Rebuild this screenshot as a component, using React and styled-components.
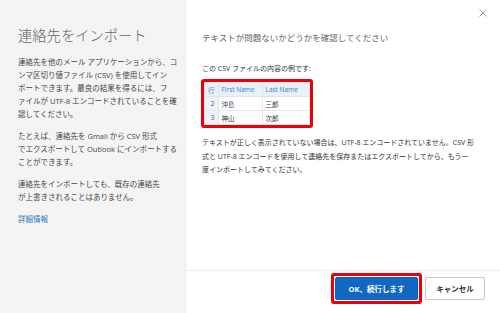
import React from 'react';
import styled, {createGlobalStyle} from 'styled-components';

const GlobalStyle = createGlobalStyle`
  html, body {
    margin: 0;
    padding: 0;
    background: #fff;
  }
  body {
    font-family: "Open Sans", "Noto Sans CJK JP", sans-serif;
    color: #333;
  }
`;

const Dialog = styled.div`
  display: flex;
  width: 500px;
  height: 313px;
  overflow: hidden;
  background: #fff;
`;

const Sidebar = styled.div`
  width: 186px;
  box-sizing: border-box;
  padding: 26px 8px 0 18px;
  background: #f4f4f4;
  border-right: 1px solid #ececec;
`;

const Title = styled.h1`
  margin: 0;
  font-size: 14.3px;
  line-height: 20px;
  font-weight: 300;
  color: #666;
  white-space: nowrap;
`;

const Para = styled.p`
  margin: ${p => p.$first ? '10px' : '9px'} 0 0;
  font-size: 7.5px;
  line-height: 13px;
  color: #444;
  white-space: nowrap;
`;

const Link = styled.a`
  display: block;
  margin-top: 9px;
  font-size: 7.5px;
  line-height: 13px;
  color: #2b79c2;
  text-decoration: none;
`;

const Main = styled.div`
  flex: 1;
  display: flex;
  flex-direction: column;
`;

const CloseRow = styled.div`
  display: flex;
  justify-content: flex-end;
  align-items: center;
  height: 26px;
  padding-right: 13px;
`;

const CloseButton = styled.button`
  display: flex;
  padding: 0;
  border: 0;
  background: none;
  cursor: pointer;
`;

const Content = styled.div`
  flex: 1;
  padding: 0 14px 0 16px;
`;

const Heading = styled.h2`
  margin: 6px 0 0;
  font-size: 8.5px;
  line-height: 12px;
  font-weight: 400;
  color: #666;
`;

const Text = styled.p`
  margin: ${p => p.$mt || '0'} 0 0;
  font-size: 7px;
  line-height: ${p => p.$lh || '13px'};
  color: #333;
  white-space: nowrap;
`;

const Highlight = styled.div`
  display: inline-flex;
  margin-top: ${p => p.$mt || '0'};
  margin-left: ${p => p.$ml || '0'};
  padding: ${p => p.$pad || '0'};
  border: 3px solid #e8000b;
  border-radius: 3px;
`;

const Table = styled.table`
  border-collapse: collapse;
  font-size: 6.5px;
`;

const Th = styled.th`
  height: 14px;
  padding: 0 3px;
  background: #e9f0f8;
  border: 1px solid #dbe5f0;
  color: #3b7fcf;
  font-weight: 400;
  text-align: left;
  width: ${p => p.$w};
  box-sizing: border-box;
`;

const RowNum = styled.td`
  height: 13px;
  padding: 0 3px;
  background: #eef3f9;
  border: 1px solid #dbe5f0;
  color: #555;
  text-align: right;
`;

const Td = styled.td`
  height: 13px;
  padding: 0 3px;
  border: 1px solid #e3e8ee;
  color: #333;
`;

const Footer = styled.div`
  display: flex;
  justify-content: flex-end;
  align-items: center;
  gap: 3px;
  height: 43px;
  box-sizing: border-box;
  padding: 3px 15px 10px 0;
  border-top: 1px solid #ececec;
`;

const Button = styled.button`
  height: 23px;
  width: ${p => p.$w};
  padding: 0;
  border-radius: 2px;
  font-family: inherit;
  font-size: 7.5px;
  font-weight: 700;
  cursor: pointer;
  border: 1px solid ${p => p.$primary ? '#0f62b4' : '#c8c8c8'};
  background: ${p => p.$primary ? '#1268c0' : '#fff'};
  color: ${p => p.$primary ? '#fff' : '#333'};
`;

const rows = [
  {n: 2, first: '沖島', last: '三郎'},
  {n: 3, first: '神山', last: '次郎'},
];

export default function App() {
  return (
    <Dialog>
      <GlobalStyle/>
      <Sidebar>
        <Title>連絡先をインポート</Title>
        <Para $first>
          連絡先を他のメール アプリケーションから、コ<br/>
          ンマ区切り値ファイル (CSV) を使用してイン<br/>
          ポートできます。最良の結果を得るには、フ<br/>
          ァイルが UTF-8 エンコードされていることを確<br/>
          認してください。
        </Para>
        <Para>
          たとえば、連絡先を Gmail から CSV 形式<br/>
          でエクスポートして Outlook にインポートする<br/>
          ことができます。
        </Para>
        <Para>
          連絡先をインポートしても、既存の連絡先<br/>
          が上書きされることはありません。
        </Para>
        <Link href="#">詳細情報</Link>
      </Sidebar>
      <Main>
        <CloseRow>
          <CloseButton aria-label="閉じる">
            <svg width="8" height="8" viewBox="0 0 8 8">
              <path d="M0.5 0.5 L7.5 7.5 M7.5 0.5 L0.5 7.5" stroke="#999" strokeWidth="0.9" fill="none"/>
            </svg>
          </CloseButton>
        </CloseRow>
        <Content>
          <Heading>テキストが問題ないかどうかを確認してください</Heading>
          <Text $mt="18px">この CSV ファイルの内容の例です:</Text>
          <Highlight $mt="4px" $ml="-1px">
            <Table>
              <thead>
                <tr>
                  <Th $w="13px">行</Th>
                  <Th $w="44px">First Name</Th>
                  <Th $w="47px">Last Name</Th>
                </tr>
              </thead>
              <tbody>
                {rows.map(r => (
                  <tr key={r.n}>
                    <RowNum>{r.n}</RowNum>
                    <Td>{r.first}</Td>
                    <Td>{r.last}</Td>
                  </tr>
                ))}
              </tbody>
            </Table>
          </Highlight>
          <Text $mt="8px" $lh="13.5px">
            テキストが正しく表示されていない場合は、UTF-8 エンコードされていません。CSV 形<br/>
            式と UTF-8 エンコードを使用して連絡先を保存またはエクスポートしてから、もう一<br/>
            度インポートしてみてください。
          </Text>
        </Content>
        <Footer>
          <Highlight $pad="1px">
            <Button $primary $w="83px">OK、続行します</Button>
          </Highlight>
          <Button $w="60px">キャンセル</Button>
        </Footer>
      </Main>
    </Dialog>
  );
}
